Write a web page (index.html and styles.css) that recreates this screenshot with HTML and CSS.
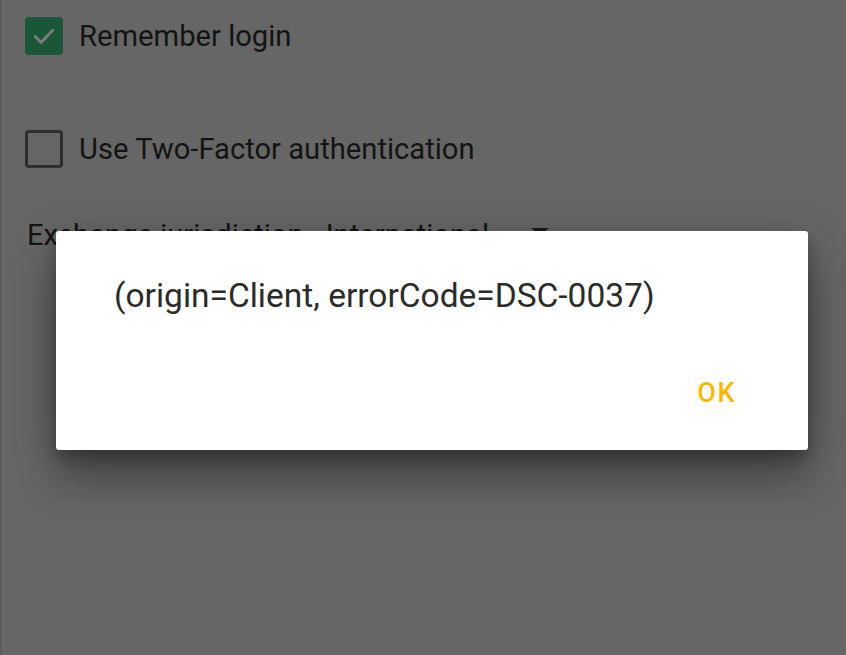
FILE: index.html
```html
<!DOCTYPE html>
<html lang="en">
  <head>
    <meta charset="UTF-8" />
    <meta name="viewport" content="width=device-width, initial-scale=1" />
    <title>Login</title>
    <link rel="stylesheet" href="styles.css">
  </head>
  <body>
    <div class="screen">
      <div class="form">
        <label class="checkRow">
          <span class="box checked">
            <svg viewBox="0 0 24 24" width="28" height="28">
              <path d="M4.5 12.5l5 5 10-10.5" fill="none" stroke="#7c7c7c" stroke-width="2.4" stroke-linecap="round" stroke-linejoin="round" />
            </svg>
          </span>
          <span class="label">Remember login</span>
        </label>

        <label class="checkRow second">
          <span class="box"></span>
          <span class="label">Use Two-Factor authentication</span>
        </label>

        <div class="selectRow">
          <span class="label">Exchange jurisdiction</span>
          <span class="label value">International</span>
          <span class="arrow"></span>
        </div>
      </div>

      <div class="scrim">
        <div class="dialog">
          <p class="message">(origin=Client, errorCode=DSC-0037)</p>
          <div class="actions">
            <button class="okButton">OK</button>
          </div>
        </div>
      </div>
    </div>
  </body>
</html>
```

FILE: styles.css
```css
* {
  box-sizing: border-box;
}
html,
body {
  margin: 0;
  padding: 0;
  height: 100%;
}
body {
  background: #666;
  font-family: Roboto, "Noto Sans", sans-serif;
  overflow: hidden;
}
.screen {
  position: relative;
  height: 100%;
  border-left: 2px solid #5c5c5c;
}
.form {
  display: flex;
  flex-direction: column;
  padding: 17px 0 0 23px;
}
.checkRow {
  display: flex;
  align-items: center;
  gap: 16px;
  height: 38px;
}
.checkRow.second {
  margin-top: 75px;
}
.box {
  width: 38px;
  height: 38px;
  border: 3px solid #2e2e2e;
  border-radius: 4px;
  display: flex;
  align-items: center;
  justify-content: center;
}
.box.checked {
  background: #1c5639;
  border-color: #1c5639;
}
.label {
  font-size: 29.2px;
  color: #141414;
  line-height: 38px;
}
.selectRow {
  display: flex;
  align-items: center;
  margin-top: 42px;
  height: 50px;
  padding-left: 2px;
}
.selectRow .value {
  margin-left: 22px;
}
.arrow {
  margin-left: 42px;
  margin-top: -8px;
  width: 0;
  height: 0;
  border-left: 9px solid transparent;
  border-right: 9px solid transparent;
  border-top: 7px solid #1a1a1a;
}
.scrim {
  position: absolute;
  inset: 0;
  padding: 231px 0 0 54px;
}
.dialog {
  width: 752px;
  height: 219px;
  background: #fff;
  border-radius: 3px;
  box-shadow: 0 30px 40px rgba(0, 0, 0, 0.26), 0 12px 50px rgba(0, 0, 0, 0.2),
    0 8px 14px rgba(0, 0, 0, 0.22);
  display: flex;
  flex-direction: column;
  padding: 44px 0 0 58px;
}
.message {
  margin: 0;
  font-size: 33.5px;
  line-height: 42px;
  color: #2b2b2b;
}
.actions {
  display: flex;
  justify-content: flex-end;
  margin-top: 54px;
  padding-right: 62px;
}
.okButton {
  border: none;
  background: #fffefb;
  color: #f6b80c;
  font-family: Roboto, "Noto Sans", sans-serif;
  font-size: 27px;
  font-weight: 500;
  letter-spacing: 1.5px;
  padding: 4px 10px;
  line-height: 36px;
}
```
